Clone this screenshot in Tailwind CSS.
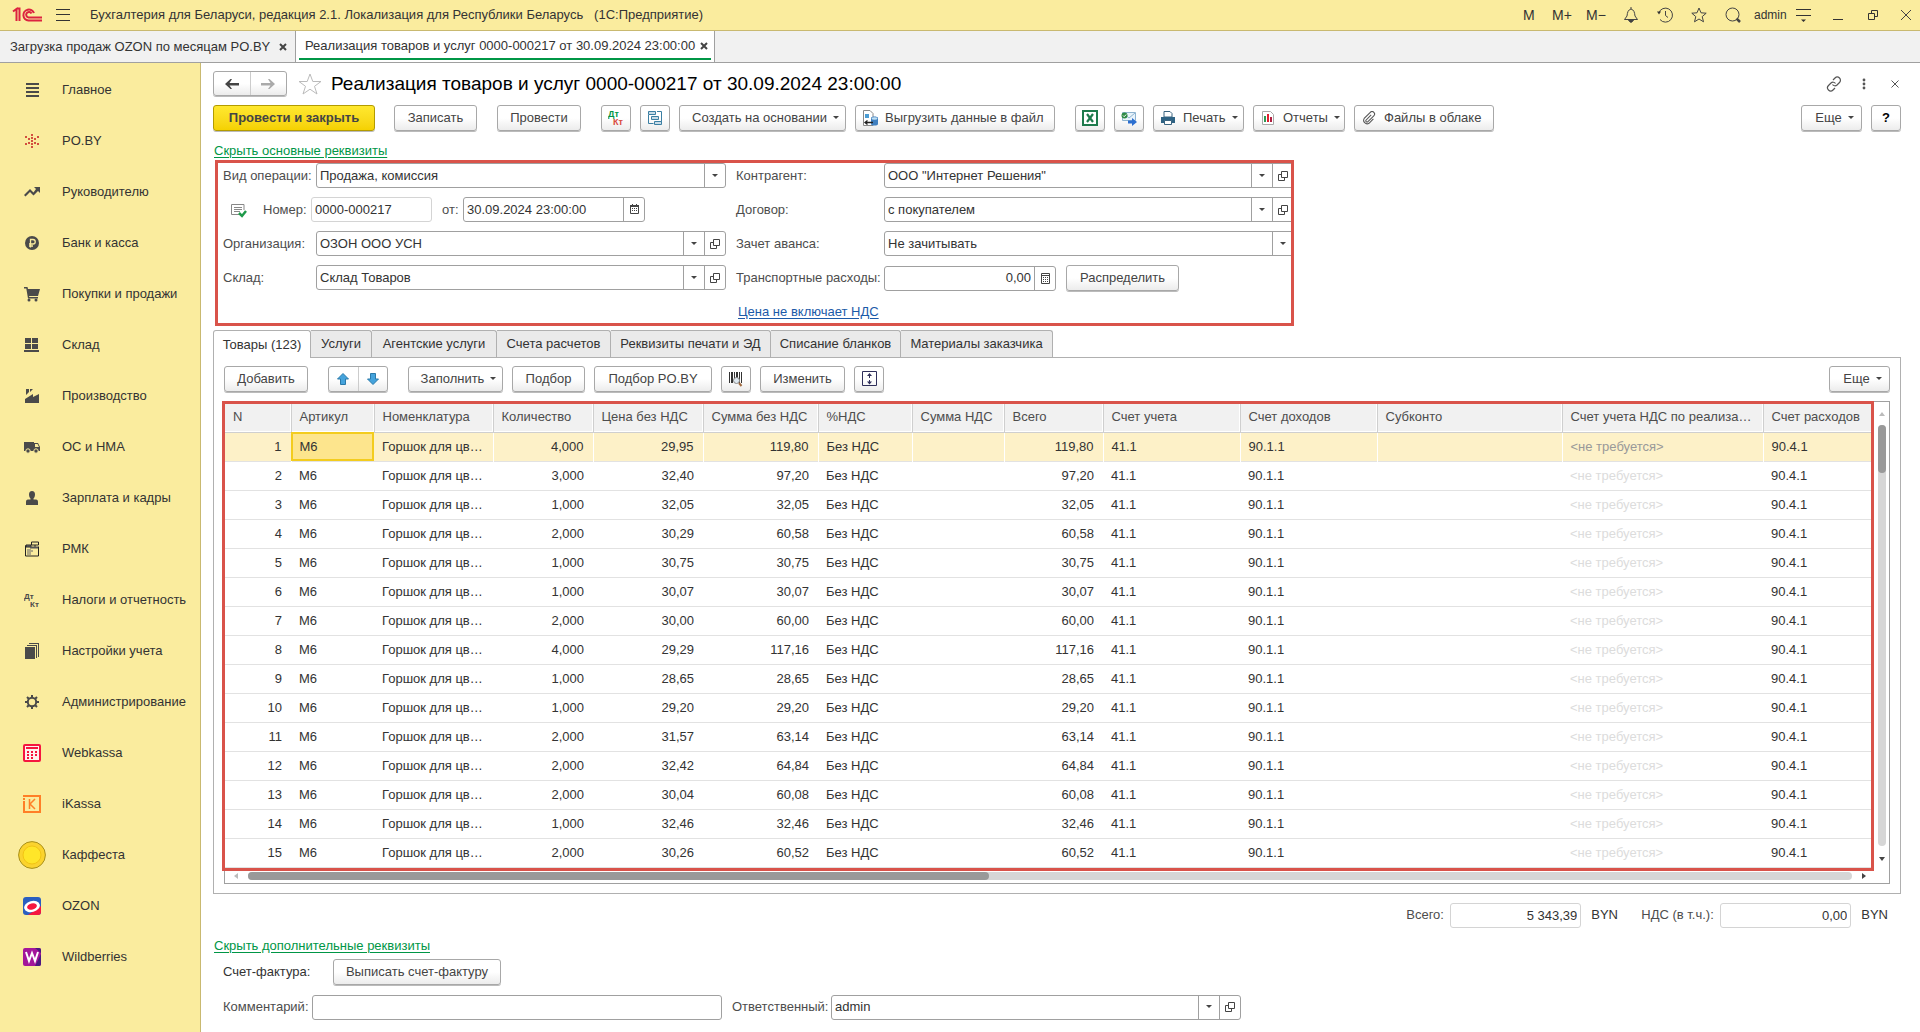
<!DOCTYPE html>
<html lang="ru">
<head>
<meta charset="utf-8">
<title>Реализация товаров и услуг</title>
<script src="https://cdn.jsdelivr.net/npm/@tailwindcss/browser@4"></script>
</head>
<body class="flex min-h-screen flex-col bg-white font-['Liberation_Sans',Arial,sans-serif] text-[13px] leading-4 text-[#333]">

<header class="flex h-[31px] shrink-0 items-center border-b border-[#c9b970] bg-[#faec9e] pl-3">
  <svg class="h-4 w-[30px]" viewBox="0 0 30 16" fill="none" stroke="#dc2340" stroke-width="2" role="img" aria-label="1C"><path d="M1 4.500 4.500 2v12M7.500 14V1.500H4.800"/><path d="M22 6a5.500 5.500 0 1 0-5.500 7.500H30"/><path d="M19.500 6.500a2.800 2.800 0 1 0-2.800 4H30"/></svg>
  <button class="ml-3.5 flex h-6 w-4 items-center" aria-label="Меню"><svg class="h-3 w-[14px]" viewBox="0 0 14 12" stroke="#333"><path d="M0 .5h14M0 5.500h14M0 11.500h14"/></svg></button>
  <h1 class="ml-[18px] whitespace-pre">Бухгалтерия для Беларуси, редакция 2.1. Локализация для Республики Беларусь   (1С:Предприятие)</h1>
  <div class="ml-auto flex items-center text-[14px]">
    <button class="w-[29px] text-left">M</button>
    <button class="w-[34px] text-left">M+</button>
    <button class="w-[37px] text-left">M−</button>
    <button class="w-[34px]" aria-label="Уведомления"><svg class="size-4" viewBox="0 0 16 16" fill="none" stroke="#444"><path d="M1.500 12.500h13l-2.500-3.500C11.500 5 11 3 8 2 5 3 4.500 5 4 9zM8 0v2"/><path d="M5.500 13.500h5l-2.500 2z" fill="#333"/></svg></button>
    <button class="w-[34px]" aria-label="История"><svg class="size-4" viewBox="0 0 16 16" fill="none" stroke="#444"><path d="M1.800 6A7 7 0 1 1 3 12.500M8.500 4v4.500l2.500 2"/><path d="M0 4.500h4l-2 3z" fill="#333" stroke="none"/></svg></button>
    <button class="w-[34px]" aria-label="Избранное"><svg class="size-4" viewBox="0 0 16 16" fill="none" stroke="#444"><path d="m8 1 2 4.800 5.200.4-4 3.400 1.300 5.200L8 12l-4.500 2.800 1.300-5.200-4-3.400L6 5.800z"/></svg></button>
    <button class="w-[29px]" aria-label="Поиск"><svg class="size-4" viewBox="0 0 16 16" fill="none" stroke="#444"><circle cx="7.500" cy="7.500" r="6.500"/><path d="m11.500 11.500 3.500 3.500" stroke-width="2.500"/></svg></button>
    <button class="w-[42px] text-left text-[12px]">admin</button>
    <button class="w-9" aria-label="Настройки"><svg class="h-4 w-[15px]" viewBox="0 0 15 16" stroke="#333"><path d="M0 2.500h15M0 8.500h15"/><path d="M5 12.500h5l-2.500 2.500z" fill="#333" stroke="none"/></svg></button>
    <button class="w-[35px]" aria-label="Свернуть"><svg class="size-3" viewBox="0 0 12 12" stroke="#333"><path d="M1 10.500h10"/></svg></button>
    <button class="w-[33px]" aria-label="Развернуть"><svg class="size-3" viewBox="0 0 12 12" fill="none" stroke="#333"><path d="M1.500 4.500h6v6h-6zM4.500 4.500v-3h6v6h-3"/></svg></button>
    <button class="w-5" aria-label="Закрыть программу"><svg class="size-3" viewBox="0 0 12 12" stroke="#444"><path d="m1 1 10 10M11 1 1 11"/></svg></button>
  </div>
</header>

<nav class="flex h-8 shrink-0 border-b border-[#a0a0a0] bg-[#f1f1f1]" aria-label="Открытые окна">
  <div class="flex w-[295px] items-center pl-2.5">
    <a href="#" class="whitespace-nowrap">Загрузка продаж OZON по месяцам PO.BY</a>
    <button class="ml-auto mr-2 flex size-2" aria-label="Закрыть вкладку"><svg class="size-2" viewBox="0 0 8 8" stroke="#444" stroke-width="2"><path d="m1 1 6 6M7 1 1 7"/></svg></button>
  </div>
  <div class="flex w-[420px] flex-col border-x border-[#a0a0a0] bg-white px-[3px] pb-[2px]">
    <div class="flex flex-1 items-center border-b-2 border-[#009646] pl-1.5 pt-[2px]">
      <a href="#" class="whitespace-nowrap">Реализация товаров и услуг 0000-000217 от 30.09.2024 23:00:00</a>
      <button class="ml-auto mr-[3px] flex size-2" aria-label="Закрыть вкладку"><svg class="size-2" viewBox="0 0 8 8" stroke="#444" stroke-width="2"><path d="m1 1 6 6M7 1 1 7"/></svg></button>
    </div>
  </div>
</nav>

<div class="flex flex-1">
  <aside class="w-[201px] shrink-0 border-r border-[#c9b970] bg-[#faec9e]">
    <ul class="pt-px text-[#333]">
      <li><a href="#" class="flex h-[51px] items-center"><span class="flex w-[62px] justify-center pl-0.5"><svg class="size-4" viewBox="0 0 16 16" fill="#4a4a4a"><path d="M2 1h13v2H2zM2 5h13v2H2zM2 9h13v2H2zM2 13h13v2H2z"/></svg></span>Главное</a></li>
      <li><a href="#" class="flex h-[51px] items-center"><span class="flex w-[62px] justify-center pl-0.5"><svg class="size-4" viewBox="0 0 16 16" fill="#d2503f"><path d="M7 1h2v2H7zM7 4h2v2H7zM7 7h2v2H7zM7 10h2v2H7zM7 13h2v2H7zM4 5h2v2H4zM10 5h2v2h-2zM4 9h2v2H4zM10 9h2v2h-2zM1 3h2v2H1zM13 3h2v2h-2zM1 10h2v2H1zM13 10h2v2h-2z"/></svg></span>PO.BY</a></li>
      <li><a href="#" class="flex h-[51px] items-center"><span class="flex w-[62px] justify-center pl-0.5"><svg class="size-4" viewBox="0 0 16 16" fill="#4a4a4a"><path d="M10 3h6v6l-2-2-4.500 4.500-3.500-3.500L1.500 12.500 0 11l6-6 3.500 3.500L12 5z"/></svg></span>Руководителю</a></li>
      <li><a href="#" class="flex h-[51px] items-center"><span class="flex w-[62px] justify-center pl-0.5"><svg class="size-4" viewBox="0 0 16 16"><circle cx="8" cy="8" r="7" fill="#4a4a4a"/><path d="M6.500 12.500v-8H9a2 2 0 0 1 0 4.500H5M5 11h4" fill="none" stroke="#faec9e" stroke-width="1.300"/></svg></span>Банк и касса</a></li>
      <li><a href="#" class="flex h-[51px] items-center"><span class="flex w-[62px] justify-center pl-0.5"><svg class="size-4" viewBox="0 0 16 16" fill="#4a4a4a"><path d="M0 1h3.500l.5 2h12l-2 7H5l.3 1H14v1.500H4L2.300 2.500H0z"/><circle cx="5" cy="14" r="1.500"/><circle cx="12" cy="14" r="1.500"/></svg></span>Покупки и продажи</a></li>
      <li><a href="#" class="flex h-[51px] items-center"><span class="flex w-[62px] justify-center pl-0.5"><svg class="size-4" viewBox="0 0 16 16" fill="#4a4a4a"><path d="M1 1h6v5H1zM8 1h6v5H8zM1 7h6v5H1zM8 7h6v5H8zM0 13h15v2H0z"/></svg></span>Склад</a></li>
      <li><a href="#" class="flex h-[51px] items-center"><span class="flex w-[62px] justify-center pl-0.5"><svg class="size-4" viewBox="0 0 16 16" fill="#4a4a4a"><path d="M1 15v-4l8-5v3l6-3v9zM2 1h3v3L2 7zM6 1h3L6 4z"/></svg></span>Производство</a></li>
      <li><a href="#" class="flex h-[51px] items-center"><span class="flex w-[62px] justify-center pl-0.5"><svg class="size-4" viewBox="0 0 16 16" fill="#4a4a4a"><path fill-rule="evenodd" d="M0 3h10v1h4l2 4v4H0zm11 2v3h4l-1.500-3z"/><circle cx="4" cy="12" r="2.200" stroke="#faec9e"/><circle cx="12" cy="12" r="2.200" stroke="#faec9e"/></svg></span>ОС и НМА</a></li>
      <li><a href="#" class="flex h-[51px] items-center"><span class="flex w-[62px] justify-center pl-0.5"><svg class="size-4" viewBox="0 0 16 16" fill="#4a4a4a"><path d="M8 1c2 0 3 1.500 3 3.500C11 7 10 8 9.500 8.500v1H12c1.500 0 2 1 2 2.500v3H2v-3c0-1.500.5-2.500 2-2.500h2.500v-1C6 8 5 7 5 4.500 5 2.500 6 1 8 1z"/></svg></span>Зарплата и кадры</a></li>
      <li><a href="#" class="flex h-[51px] items-center"><span class="flex w-[62px] justify-center pl-0.5"><svg class="size-4" viewBox="0 0 16 16" fill="none" stroke="#222"><path d="M1.500 4.500v10.500h13V5.500M7.500 1h7v3h-7zM11 4v2"/><path d="M2 4h5v2H2z" fill="#777"/><path d="M6 6.500h8" stroke-width="2" stroke="#555"/><path d="M4 8v6M6 8v6M8 9v2" stroke="#666"/></svg></span>РМК</a></li>
      <li><a href="#" class="flex h-[51px] items-center"><span class="flex w-[62px] justify-center pl-0.5"><svg class="size-4" viewBox="0 0 16 16" fill="#4a4a4a" font-family="Liberation Sans" font-weight="bold" font-size="8"><text x="0" y="7">Дт</text><text x="6" y="15">Кт</text></svg></span>Налоги и отчетность</a></li>
      <li><a href="#" class="flex h-[51px] items-center"><span class="flex w-[62px] justify-center pl-0.5"><svg class="size-4" viewBox="0 0 16 16" fill="#4a4a4a"><path d="M1 4h10v12H1zM3 2h10v13h-1V3H3zM5 0h10v14h-1V1H5z"/></svg></span>Настройки учета</a></li>
      <li><a href="#" class="flex h-[51px] items-center"><span class="flex w-[62px] justify-center pl-0.5"><svg class="size-4" viewBox="0 0 16 16" fill="none" stroke="#4a4a4a" stroke-width="2"><circle cx="8" cy="8" r="4.200"/><path d="M8 1v3M8 12v3M1 8h3M12 8h3M3 3l2 2M11 11l2 2M3 13l2-2M11 5l2-2"/></svg></span>Администрирование</a></li>
      <li><a href="#" class="flex h-[51px] items-center"><span class="flex w-[62px] justify-center pl-0.5"><svg class="size-[18px]" viewBox="0 0 18 18"><rect x="1" y="1" width="16" height="16" rx="1" fill="#fff3ee" stroke="#f5163f" stroke-width="2"/><path d="M3 3h12v2H3zM4 7h2v2H4zM8 7h2v2H8zM12 7h2v2h-2zM4 10h2v2H4zM8 10h2v2H8zM12 10h2v2h-2zM4 13h2v2H4zM8 13h2v2H8z" fill="#f5163f"/></svg></span>Webkassa</a></li>
      <li><a href="#" class="flex h-[51px] items-center"><span class="flex w-[62px] justify-center pl-0.5"><svg class="size-[18px]" viewBox="0 0 18 18" fill="none" stroke="#ff7f27" stroke-width="2"><path d="M0 1h17v16H1V6M1 3v2"/><path d="M6.500 4v10M12 4 7 9l5 5" stroke-width="1.500"/></svg></span>iKassa</a></li>
      <li><a href="#" class="flex h-[51px] items-center"><span class="flex w-[62px] justify-center pl-0.5"><svg class="size-7" viewBox="0 0 28 28"><circle cx="14" cy="14" r="13.400" fill="#fbd32e" stroke="#a8901c"/><circle cx="14" cy="14" r="9" fill="#ffe629" stroke="#f2c414"/></svg></span>Каффеста</a></li>
      <li><a href="#" class="flex h-[51px] items-center"><span class="flex w-[62px] justify-center pl-0.5"><svg class="size-[18px]" viewBox="0 0 18 18"><rect width="18" height="18" rx="3" fill="#2a5fc0"/><path d="M18 9v6a3 3 0 0 1-3 3H5z" fill="#f5163f"/><ellipse cx="9" cy="9.500" rx="8" ry="5.500" fill="#fff" transform="rotate(-15 9 9.500)"/><ellipse cx="9" cy="9.500" rx="5" ry="3" fill="#f5163f" transform="rotate(-15 9 9.500)"/></svg></span>OZON</a></li>
      <li><a href="#" class="flex h-[51px] items-center"><span class="flex w-[62px] justify-center pl-0.5"><svg class="size-[18px]" viewBox="0 0 18 18"><rect width="18" height="18" rx="2" fill="#a3169a"/><path d="M12 18 18 6v10a2 2 0 0 1-2 2zM12 0h4a2 2 0 0 1 2 2v3z" fill="#4a1980"/><path d="m3 4 3 9 3-8 3 8 3-9" fill="none" stroke="#fff" stroke-width="2"/></svg></span>Wildberries</a></li>
    </ul>
  </aside>

  <main class="min-w-0 flex-1 pl-3 pr-[19px] pt-2">
    <div class="flex h-[25px] items-center">
      <div class="flex h-[25px] w-[74px] rounded-[3px] border border-[#a8a8a8] bg-linear-to-b from-white from-50% to-[#ececec] shadow-[0_1px_0_#bbb]">
        <button class="flex flex-1 items-center justify-center border-r border-[#ccc]" aria-label="Назад"><svg class="h-3 w-[14px]" viewBox="0 0 14 12" fill="#444"><path d="m0 6 5.500-5H7L4.500 5H14v2.500H4.500L7 11H5.500z"/></svg></button>
        <button class="flex flex-1 items-center justify-center" aria-label="Вперед"><svg class="h-3 w-[14px]" viewBox="0 0 14 12" fill="#aaa"><path d="M14 6 8.500 1H7l2.500 4H0v2.500h9.500L7 11h1.500z"/></svg></button>
      </div>
      <button class="ml-[11px]" aria-label="В избранное"><svg class="block h-[22px] w-6" viewBox="0 0 24 22" fill="none" stroke="#bbb"><path d="m12 1 2.800 7.500H23l-6.500 4.800 2.500 7.700-7-4.800-7 4.800 2.500-7.700L1 8.500h8.200z"/></svg></button>
      <h2 class="ml-[9px] whitespace-nowrap text-[19px] leading-6 text-black">Реализация товаров и услуг 0000-000217 от 30.09.2024 23:00:00</h2>
      <div class="ml-auto flex items-center">
        <button class="w-9" aria-label="Ссылка"><svg class="size-4" viewBox="0 0 16 16" fill="none" stroke="#555" stroke-width="1.200"><path d="m7 4 2-2a3 3 0 0 1 4.500 4.500l-2.500 2.500a3 3 0 0 1-4.500-.5M9 12l-2 2a3 3 0 0 1-4.500-4.500L5 7a3 3 0 0 1 4.500.5"/></svg></button>
        <button class="w-[29px]" aria-label="Ещё действия"><svg class="h-3 w-1" viewBox="0 0 4 12" fill="#555"><circle cx="2" cy="2" r="1.400"/><circle cx="2" cy="6" r="1.400"/><circle cx="2" cy="10" r="1.400"/></svg></button>
        <button class="w-2.5" aria-label="Закрыть"><svg class="size-2" viewBox="0 0 8 8" stroke="#555"><path d="m.5.5 7 7M7.500.5l-7 7"/></svg></button>
      </div>
    </div>

    <div class="mt-[9px] flex items-center text-[#444]">
      <button class="h-[26px] w-[162px] rounded-[3px] border border-[#b39b00] bg-linear-to-b from-[#ffe82e] to-[#f5d100] font-bold shadow-[0_1px_0_#bbb]">Провести и закрыть</button>
      <button class="ml-[19px] h-[26px] w-[83px] rounded-[3px] border border-[#a8a8a8] bg-linear-to-b from-white from-50% to-[#ececec] shadow-[0_1px_0_#bbb]">Записать</button>
      <button class="ml-5 h-[26px] w-[84px] rounded-[3px] border border-[#a8a8a8] bg-linear-to-b from-white from-50% to-[#ececec] shadow-[0_1px_0_#bbb]">Провести</button>
      <button class="ml-5 flex h-[26px] w-[30px] items-center justify-center rounded-[3px] border border-[#a8a8a8] bg-linear-to-b from-white from-50% to-[#ececec] shadow-[0_1px_0_#bbb]" aria-label="Проводки"><svg class="size-4" viewBox="0 0 16 16" font-family="Liberation Sans" font-weight="bold" font-size="9"><text x="0" y="7" fill="#009646">Дт</text><text x="5" y="15" fill="#d94a3d">Кт</text></svg></button>
      <button class="ml-[9px] flex h-[26px] w-[30px] items-center justify-center rounded-[3px] border border-[#a8a8a8] bg-linear-to-b from-white from-50% to-[#ececec] shadow-[0_1px_0_#bbb]" aria-label="Структура подчиненности"><svg class="size-4" viewBox="0 0 16 16" fill="#c8dce8" stroke="#3b7fa3"><path d="M1.500 5v8.500h5M10 1.500h4.500V13" fill="none"/><path d="M1.500 1.500h7v3h-7zM4.500 6.500h7v3h-7zM7.500 11.500h7v3h-7z"/></svg></button>
      <button class="ml-[9px] flex h-[26px] w-[167px] items-center justify-center gap-[6px] rounded-[3px] border border-[#a8a8a8] bg-linear-to-b from-white from-50% to-[#ececec] pl-1.5 shadow-[0_1px_0_#bbb]">Создать на основании<svg class="h-1 w-1.5" viewBox="0 0 6 4" fill="#444"><path d="M0 0h6L3 3z"/></svg></button>
      <button class="ml-[9px] flex h-[26px] w-[200px] items-center rounded-[3px] border border-[#a8a8a8] bg-linear-to-b from-white from-50% to-[#ececec] pl-1.5 shadow-[0_1px_0_#bbb]"><svg class="mr-[7px] size-4" viewBox="0 0 16 16"><path d="M1.500.5H8l3 3v12H1.500z" fill="#fff" stroke="#888"/><path d="M3 4h4v4H3z" fill="#4b9cd3"/><path d="M9 8c0-2 7-2 7 0v6c0 2-7 2-7 0z" fill="#3f7fbf"/><ellipse cx="12.500" cy="8.500" rx="3" ry="1.200" fill="#bfe0f5"/><path d="M3 12.500h8M5.500 10.500 3 12.500l2.500 2" fill="none" stroke="#222" stroke-width="1.300"/></svg>Выгрузить данные в файл</button>
      <button class="ml-5 flex h-[26px] w-[30px] items-center justify-center rounded-[3px] border border-[#a8a8a8] bg-linear-to-b from-white from-50% to-[#ececec] shadow-[0_1px_0_#bbb]" aria-label="Excel"><svg class="size-4" viewBox="0 0 16 16" fill="none" stroke="#1d7a4c" stroke-width="2"><path d="M1 1h14v14H1z" fill="#fff"/><path d="m5 4 6 8M11 4l-6 8" stroke-width="2.200"/></svg></button>
      <button class="ml-[9px] flex h-[26px] w-[30px] items-center justify-center rounded-[3px] border border-[#a8a8a8] bg-linear-to-b from-white from-50% to-[#ececec] shadow-[0_1px_0_#bbb]" aria-label="Отправить"><svg class="size-4" viewBox="0 0 16 16"><path d="M1.500 2.500h13v8h-13z" fill="#e8f3fb" stroke="#8fb4d0"/><path d="m2 3 6 5 6-5" fill="none" stroke="#8fb4d0"/><circle cx="3.500" cy="5.500" r="3" fill="#2f8a45"/><path d="m2 5.500 1.200 1.200L5.200 4.500" fill="none" stroke="#fff"/><path d="M7 10.500h4V8l5 4-5 4v-2.500H7z" fill="#2c6fd0"/></svg></button>
      <button class="ml-[9px] flex h-[26px] w-[91px] items-center rounded-[3px] border border-[#a8a8a8] bg-linear-to-b from-white from-50% to-[#ececec] pl-1.5 shadow-[0_1px_0_#bbb]"><svg class="mr-[7px] size-4" viewBox="0 0 16 16"><path d="M4 1.500h6l2 2V7H4z" fill="#fff" stroke="#3a6480"/><path d="M1 7h14v6H1z" fill="#2f6384"/><path d="M4.500 10.500h7v4h-7z" fill="#fff" stroke="#3a6480"/></svg>Печать<svg class="ml-1.5 h-1 w-1.5" viewBox="0 0 6 4" fill="#444"><path d="M0 0h6L3 3z"/></svg></button>
      <button class="ml-[9px] flex h-[26px] w-[92px] items-center rounded-[3px] border border-[#a8a8a8] bg-linear-to-b from-white from-50% to-[#ececec] pl-1.5 shadow-[0_1px_0_#bbb]"><svg class="mr-[7px] size-4" viewBox="0 0 16 16"><path d="M2.500 1.500h8l3 3v10h-11z" fill="#fff" stroke="#aaa"/><path d="M4 6h2v6H4z" fill="#2f9a55"/><path d="M7 4h2v8H7z" fill="#e02030"/><path d="M10 7h2v5h-2z" fill="#b02040"/></svg>Отчеты<svg class="ml-1.5 h-1 w-1.5" viewBox="0 0 6 4" fill="#444"><path d="M0 0h6L3 3z"/></svg></button>
      <button class="ml-[9px] flex h-[26px] w-[140px] items-center rounded-[3px] border border-[#a8a8a8] bg-linear-to-b from-white from-50% to-[#ececec] pl-[7px] shadow-[0_1px_0_#bbb]"><svg class="mr-2 size-[14px]" viewBox="0 0 16 16" fill="none" stroke="#555" stroke-width="1.200"><path d="m10.500 4.500-6 6a1.500 1.500 0 0 0 2 2l7-7a2.800 2.800 0 0 0-4-4l-7 7a4 4 0 0 0 5.500 5.500l5-5"/></svg>Файлы в облаке</button>
      <button class="ml-auto flex h-[26px] w-[61px] items-center justify-center gap-[6px] rounded-[3px] border border-[#a8a8a8] bg-linear-to-b from-white from-50% to-[#ececec] pl-1.5 shadow-[0_1px_0_#bbb]">Еще<svg class="h-1 w-1.5" viewBox="0 0 6 4" fill="#444"><path d="M0 0h6L3 3z"/></svg></button>
      <button class="ml-[9px] h-[26px] w-[30px] rounded-[3px] border border-[#a8a8a8] bg-linear-to-b from-white from-50% to-[#ececec] font-bold text-black shadow-[0_1px_0_#bbb]">?</button>
    </div>

    <div class="mt-3 flex h-[17px]"><a href="#" class="ml-px text-[#009646] underline underline-offset-2">Скрыть основные реквизиты</a></div>

    <section class="ml-0.5 flex h-[166px] w-[1079px] overflow-hidden border-3 border-[#d9534a] pl-[5px] text-[#4d4d4d]">
      <div class="flex w-[503px] shrink-0 flex-col gap-[9px]">
        <div class="flex items-center"><label for="op" class="w-[93px]">Вид операции:</label>
          <div class="flex h-[25px] w-[410px] rounded-[3px] border border-[#a0a0a0]"><select id="op" class="min-w-0 flex-1 appearance-none px-[3px] text-[#333]"><option>Продажа, комиссия</option></select><span class="pointer-events-none flex w-[21px] items-center justify-center border-l border-[#a0a0a0]"><svg class="h-1 w-1.5" viewBox="0 0 6 4" fill="#444"><path d="M0 0h6L3 3z"/></svg></span></div></div>
        <div class="flex items-center"><svg class="ml-2 size-4" viewBox="0 0 16 16" fill="none" stroke="#888"><path d="M9 12.500H.5v-10h12.500V8M3 5.500h8M3 7.500h8M3 9.500h6"/><path d="m8 11 3 3 4-5" stroke="#1f9a4a" stroke-width="2.500"/></svg>
          <label for="num" class="ml-4 w-12">Номер:</label>
          <input id="num" value="0000-000217" readonly class="h-[25px] w-[121px] rounded-[3px] border border-[#d4d4d4] px-[3px] text-[#333]">
          <label for="date" class="ml-2.5 w-[21px]">от:</label>
          <div class="flex h-[25px] w-[182px] rounded-[3px] border border-[#a0a0a0]"><input id="date" value="30.09.2024 23:00:00" class="min-w-0 flex-1 px-[3px] text-[#333]"><button class="flex w-[21px] items-center justify-center border-l border-[#a0a0a0]" aria-label="Календарь"><svg class="h-[11px] w-[9px]" viewBox="0 0 9 11" fill="none" stroke="#444"><path d="M.5 1.500h8v8h-8z"/><path d="M0 1h9v2H0zM2 0h1v1H2zM6 0h1v1H6zM2 4h1v1H2zM4 4h1v1H4zM6 4h1v1H6zM2 6h1v1H2zM4 6h1v1H4zM6 6h1v1H6z" fill="#444" stroke="none"/></svg></button></div></div>
        <div class="flex items-center"><label for="org" class="w-[93px]">Организация:</label>
          <div class="flex h-[25px] w-[410px] rounded-[3px] border border-[#a0a0a0]"><input id="org" value="ОЗОН ООО УСН" class="min-w-0 flex-1 px-[3px] text-[#333]"><button class="flex w-[21px] items-center justify-center border-l border-[#a0a0a0]" aria-label="Выбрать"><svg class="h-1 w-1.5" viewBox="0 0 6 4" fill="#444"><path d="M0 0h6L3 3z"/></svg></button><button class="flex w-[21px] items-center justify-center border-l border-[#a0a0a0]" aria-label="Открыть"><svg class="size-[10px]" viewBox="0 0 10 10" fill="none" stroke="#444"><path d="M3.500.5h6v6h-6zM3 3.500H.5v6h6V7"/></svg></button></div></div>
        <div class="flex items-center"><label for="store" class="w-[93px]">Склад:</label>
          <div class="flex h-[25px] w-[410px] rounded-[3px] border border-[#a0a0a0]"><input id="store" value="Склад Товаров" class="min-w-0 flex-1 px-[3px] text-[#333]"><button class="flex w-[21px] items-center justify-center border-l border-[#a0a0a0]" aria-label="Выбрать"><svg class="h-1 w-1.5" viewBox="0 0 6 4" fill="#444"><path d="M0 0h6L3 3z"/></svg></button><button class="flex w-[21px] items-center justify-center border-l border-[#a0a0a0]" aria-label="Открыть"><svg class="size-[10px]" viewBox="0 0 10 10" fill="none" stroke="#444"><path d="M3.500.5h6v6h-6zM3 3.500H.5v6h6V7"/></svg></button></div></div>
      </div>
      <div class="ml-2.5 flex w-[560px] shrink-0 flex-col gap-[9px]">
        <div class="flex items-center"><label for="agent" class="w-[148px]">Контрагент:</label>
          <div class="flex h-[25px] w-[410px] rounded-[3px] border border-[#a0a0a0]"><input id="agent" value="ООО &quot;Интернет Решения&quot;" class="min-w-0 flex-1 px-[3px] text-[#333]"><button class="flex w-[21px] items-center justify-center border-l border-[#a0a0a0]" aria-label="Выбрать"><svg class="h-1 w-1.5" viewBox="0 0 6 4" fill="#444"><path d="M0 0h6L3 3z"/></svg></button><button class="flex w-[21px] items-center justify-center border-l border-[#a0a0a0]" aria-label="Открыть"><svg class="size-[10px]" viewBox="0 0 10 10" fill="none" stroke="#444"><path d="M3.500.5h6v6h-6zM3 3.500H.5v6h6V7"/></svg></button></div></div>
        <div class="flex items-center"><label for="contract" class="w-[148px]">Договор:</label>
          <div class="flex h-[25px] w-[410px] rounded-[3px] border border-[#a0a0a0]"><input id="contract" value="с покупателем" class="min-w-0 flex-1 px-[3px] text-[#333]"><button class="flex w-[21px] items-center justify-center border-l border-[#a0a0a0]" aria-label="Выбрать"><svg class="h-1 w-1.5" viewBox="0 0 6 4" fill="#444"><path d="M0 0h6L3 3z"/></svg></button><button class="flex w-[21px] items-center justify-center border-l border-[#a0a0a0]" aria-label="Открыть"><svg class="size-[10px]" viewBox="0 0 10 10" fill="none" stroke="#444"><path d="M3.500.5h6v6h-6zM3 3.500H.5v6h6V7"/></svg></button></div></div>
        <div class="flex items-center"><label for="adv" class="w-[148px]">Зачет аванса:</label>
          <div class="flex h-[25px] w-[410px] rounded-[3px] border border-[#a0a0a0]"><select id="adv" class="min-w-0 flex-1 appearance-none px-[3px] text-[#333]"><option>Не зачитывать</option></select><span class="pointer-events-none flex w-[21px] items-center justify-center border-l border-[#a0a0a0]"><svg class="h-1 w-1.5" viewBox="0 0 6 4" fill="#444"><path d="M0 0h6L3 3z"/></svg></span></div></div>
        <div class="flex items-center"><label for="transp" class="w-[148px] whitespace-nowrap">Транспортные расходы:</label>
          <div class="flex h-[25px] w-[172px] rounded-[3px] border border-[#a0a0a0]"><input id="transp" value="0,00" class="min-w-0 flex-1 px-[3px] text-right text-[#333]"><button class="flex w-[21px] items-center justify-center border-l border-[#a0a0a0]" aria-label="Калькулятор"><svg class="h-[11px] w-[9px]" viewBox="0 0 9 11" fill="none" stroke="#444"><path d="M.5.500h8v10h-8zM1 2.500h7M2 4.500h1M4 4.500h1M6 4.500h1M2 6.500h1M4 6.500h1M6 6.500h1M2 8.500h1M4 8.500h1M6 8.500h1"/></svg></button></div>
          <button class="ml-2.5 h-[26px] w-[113px] rounded-[3px] border border-[#a8a8a8] bg-linear-to-b from-white from-50% to-[#ececec] text-[#444] shadow-[0_1px_0_#bbb]">Распределить</button></div>
        <a href="#" class="ml-0.5 mt-1 self-start text-[#1b5aa8] underline underline-offset-2">Цена не включает НДС</a>
      </div>
    </section>

    <div role="tablist" class="mt-1 flex h-[28px] border-b border-[#b0b0b0]">
      <button role="tab" aria-selected="true" class="-mb-px h-[28px] w-[98px] rounded-t-[3px] border border-b-0 border-[#b0b0b0] bg-white">Товары (123)</button>
      <button role="tab" class="h-[27px] w-[61px] rounded-tr-[3px] border border-b-0 border-l-0 border-[#b0b0b0] bg-[#eaeaea]">Услуги</button>
      <button role="tab" class="h-[27px] w-[125px] rounded-tr-[3px] border border-b-0 border-l-0 border-[#b0b0b0] bg-[#eaeaea]">Агентские услуги</button>
      <button role="tab" class="h-[27px] w-[114px] rounded-tr-[3px] border border-b-0 border-l-0 border-[#b0b0b0] bg-[#eaeaea]">Счета расчетов</button>
      <button role="tab" class="h-[27px] w-[160px] rounded-tr-[3px] border border-b-0 border-l-0 border-[#b0b0b0] bg-[#eaeaea]">Реквизиты печати и ЭД</button>
      <button role="tab" class="h-[27px] w-[130px] rounded-tr-[3px] border border-b-0 border-l-0 border-[#b0b0b0] bg-[#eaeaea]">Списание бланков</button>
      <button role="tab" class="h-[27px] w-[152px] rounded-tr-[3px] border border-b-0 border-l-0 border-[#b0b0b0] bg-[#eaeaea]">Материалы заказчика</button>
    </div>

    <section class="border border-t-0 border-[#b0b0b0] px-2.5 pb-[9px] pt-2">
      <div class="flex items-center text-[#444]">
        <button class="h-[26px] w-[84px] rounded-[3px] border border-[#a8a8a8] bg-linear-to-b from-white from-50% to-[#ececec] shadow-[0_1px_0_#bbb]">Добавить</button>
        <div class="ml-5 flex h-[26px] w-[60px] rounded-[3px] border border-[#a8a8a8] bg-linear-to-b from-white from-50% to-[#ececec] shadow-[0_1px_0_#bbb]">
          <button class="flex flex-1 items-center justify-center border-r border-[#ccc]" aria-label="Вверх"><svg class="size-3" viewBox="0 0 12 12" fill="#45a3dc" stroke="#2b7aaa"><path d="m6 .5 5.500 5.500H8.500v5.500h-5V6H.5z"/></svg></button>
          <button class="flex flex-1 items-center justify-center" aria-label="Вниз"><svg class="size-3" viewBox="0 0 12 12" fill="#45a3dc" stroke="#2b7aaa"><path d="M6 11.500.5 6h3V.5h5V6h3z"/></svg></button>
        </div>
        <button class="ml-5 flex h-[26px] w-[95px] items-center justify-center gap-[6px] rounded-[3px] border border-[#a8a8a8] bg-linear-to-b from-white from-50% to-[#ececec] pl-1.5 shadow-[0_1px_0_#bbb]">Заполнить<svg class="h-1 w-1.5" viewBox="0 0 6 4" fill="#444"><path d="M0 0h6L3 3z"/></svg></button>
        <button class="ml-[9px] h-[26px] w-[73px] rounded-[3px] border border-[#a8a8a8] bg-linear-to-b from-white from-50% to-[#ececec] shadow-[0_1px_0_#bbb]">Подбор</button>
        <button class="ml-[9px] h-[26px] w-[118px] rounded-[3px] border border-[#a8a8a8] bg-linear-to-b from-white from-50% to-[#ececec] shadow-[0_1px_0_#bbb]">Подбор PO.BY</button>
        <button class="ml-[9px] flex h-[26px] w-[30px] items-center justify-center rounded-[3px] border border-[#a8a8a8] bg-linear-to-b from-white from-50% to-[#ececec] shadow-[0_1px_0_#bbb]" aria-label="Штрихкод"><svg class="size-4" viewBox="0 0 16 16"><path d="M1 1h1v11H1zM3 1h2v11H3zM6 1h1v9H6zM8 1h2v9H8zM11 1h1v11h-1zM13 1h1v11h-1z" fill="#333"/><circle cx="8.500" cy="9.500" r="3" fill="#dfe9f0" stroke="#888"/><path d="m11 12 2.500 3" stroke="#a06a40" stroke-width="2"/></svg></button>
        <button class="ml-[9px] h-[26px] w-[85px] rounded-[3px] border border-[#a8a8a8] bg-linear-to-b from-white from-50% to-[#ececec] shadow-[0_1px_0_#bbb]">Изменить</button>
        <button class="ml-[9px] flex h-[26px] w-[30px] items-center justify-center rounded-[3px] border border-[#a8a8a8] bg-linear-to-b from-white from-50% to-[#ececec] shadow-[0_1px_0_#bbb]" aria-label="Высота строк"><svg class="h-4 w-[15px]" viewBox="0 0 15 16" fill="none" stroke="#2f2f5a"><path d="M.5.500h14v14H.500z"/><path d="M7.500 3v4M7.500 9v4"/><path d="M5 5h5L7.500 2zM5 10.500h5L7.500 13.500z" fill="#2f2f5a" stroke="none"/></svg></button>
        <button class="ml-auto flex h-[26px] w-[61px] items-center justify-center gap-[6px] rounded-[3px] border border-[#a8a8a8] bg-linear-to-b from-white from-50% to-[#ececec] pl-1.5 shadow-[0_1px_0_#bbb]">Еще<svg class="h-1 w-1.5" viewBox="0 0 6 4" fill="#444"><path d="M0 0h6L3 3z"/></svg></button>
      </div>

      <div class="mt-[9px] border border-[#a0a0a0]">
        <div class="flex">
          <div class="relative min-w-0 flex-1">
            <table class="w-full table-fixed border-collapse">
              <colgroup><col class="w-[66px]"><col class="w-[83px]"><col class="w-[119px]"><col class="w-[100px]"><col class="w-[110px]"><col class="w-[115px]"><col class="w-[94px]"><col class="w-[92px]"><col class="w-[99px]"><col class="w-[137px]"><col class="w-[137px]"><col class="w-[185px]"><col class="w-[201px]"><col></colgroup>
              <thead><tr id="head" class="h-[30px] bg-[#f1f1f1] text-left text-[#4d4d4d]"></tr></thead>
              <tbody id="rows"></tbody>
            </table>
            <div class="pointer-events-none absolute -left-[3px] -top-px -bottom-[3px] right-0 border-3 border-[#d9534a]"></div>
          </div>
          <div class="flex w-[15px] shrink-0 flex-col items-center pb-[7px] pt-[10px]">
            <svg class="h-1 w-1.5" viewBox="0 0 6 4" fill="#bbb"><path d="M0 4h6L3 0z"/></svg>
            <div class="mt-[9px] w-2 flex-1 rounded-full bg-[#d6d6d6]"><div class="h-12 rounded-full bg-[#999]"></div></div>
            <svg class="mt-[11px] h-1 w-1.5" viewBox="0 0 6 4" fill="#444"><path d="M0 0h6L3 4z"/></svg>
          </div>
        </div>
        <div class="flex h-[15px] items-center pl-[9px] pr-[23px] pt-[2px]">
          <svg class="h-1.5 w-1" viewBox="0 0 4 6" fill="#bbb"><path d="M4 0v6L0 3z"/></svg>
          <div class="ml-2.5 mr-2.5 h-2 flex-1 rounded-full bg-[#d6d6d6]"><div class="h-2 w-[741px] rounded-full bg-[#999]"></div></div>
          <svg class="h-1.5 w-1" viewBox="0 0 4 6" fill="#444"><path d="M0 0v6l4-3z"/></svg>
        </div>
      </div>
    </section>

    <div class="mt-[9px] flex items-center justify-end pr-[13px]">
      <label for="total" class="w-11 text-[#4d4d4d]">Всего:</label>
      <input id="total" value="5 343,39" readonly class="h-[25px] w-[131px] rounded-[3px] border border-[#d4d4d4] px-[3px] text-right">
      <span class="ml-2.5 w-[50px]">BYN</span>
      <label for="vat" class="w-[79px] text-[#4d4d4d]">НДС (в т.ч.):</label>
      <input id="vat" value="0,00" readonly class="h-[25px] w-[131px] rounded-[3px] border border-[#d4d4d4] px-[3px] text-right">
      <span class="ml-2.5">BYN</span>
    </div>

    <div class="mt-[10px] flex"><a href="#" class="ml-px text-[#009646] underline underline-offset-2">Скрыть дополнительные реквизиты</a></div>
    <div class="mt-[5px] flex items-center pl-2.5"><span class="w-[110px]">Счет-фактура:</span>
      <button class="h-[26px] w-[168px] rounded-[3px] border border-[#a8a8a8] bg-linear-to-b from-white from-50% to-[#ececec] text-[#444] shadow-[0_1px_0_#bbb]">Выписать счет-фактуру</button></div>
    <div class="mt-[10px] flex items-center pl-2.5 text-[#4d4d4d]">
      <label for="comment" class="w-[89px]">Комментарий:</label>
      <input id="comment" class="h-[25px] w-[410px] rounded-[3px] border border-[#a0a0a0] px-[3px]">
      <label for="resp" class="ml-2.5 w-[99px]">Ответственный:</label>
      <div class="flex h-[25px] w-[410px] rounded-[3px] border border-[#a0a0a0]"><input id="resp" value="admin" class="min-w-0 flex-1 px-[3px] text-[#333]"><button class="flex w-[21px] items-center justify-center border-l border-[#a0a0a0]" aria-label="Выбрать"><svg class="h-1 w-1.5" viewBox="0 0 6 4" fill="#444"><path d="M0 0h6L3 3z"/></svg></button><button class="flex w-[21px] items-center justify-center border-l border-[#a0a0a0]" aria-label="Открыть"><svg class="size-[10px]" viewBox="0 0 10 10" fill="none" stroke="#444"><path d="M3.500.5h6v6h-6zM3 3.500H.5v6h6V7"/></svg></button></div>
    </div>
  </main>
</div>

<script>
const heads = ['N','Артикул','Номенклатура','Количество','Цена без НДС','Сумма без НДС','%НДС','Сумма НДС','Всего','Счет учета','Счет доходов','Субконто','Счет учета НДС по реализа…','Счет расходов'];
document.getElementById('head').innerHTML = heads.map(h => `<th class="whitespace-nowrap border-b border-r border-[#cfcfcf] pl-2 font-normal shadow-[inset_-1px_-1px_0_#fff]">${h}</th>`).join('');
const data = [
  ['4,000','29,95','119,80'],['3,000','32,40','97,20'],['1,000','32,05','32,05'],['2,000','30,29','60,58'],['1,000','30,75','30,75'],
  ['1,000','30,07','30,07'],['2,000','30,00','60,00'],['4,000','29,29','117,16'],['1,000','28,65','28,65'],['1,000','29,20','29,20'],
  ['2,000','31,57','63,14'],['2,000','32,42','64,84'],['2,000','30,04','60,08'],['1,000','32,46','32,46'],['2,000','30,26','60,52']];
document.getElementById('rows').innerHTML = data.map(([qty, price, sum], i) => {
  const first = i === 0;
  const cells = [i + 1, 'М6', 'Горшок для цв…', qty, price, sum, 'Без НДС', '', sum, '41.1', '90.1.1', '', '&lt;не требуется&gt;', '90.4.1'];
  return `<tr class="h-[29px] border-b border-[#e2e2e2] ${first ? 'bg-[#fdf1c8]' : ''}">` + cells.map((c, j) => {
    const align = [0, 3, 4, 5, 8].includes(j) ? 'text-right' : '';
    const tone = j === 12 ? (first ? 'text-[#999]' : 'text-[#dcdcdc]') : '';
    const line = first ? (j === 1 ? 'bg-[#fde58d] outline-2 -outline-offset-2 outline-[#f3cc1e]' : 'border-r border-r-white') : '';
    return `<td class="whitespace-nowrap pl-2 pr-[9px] ${align} ${tone} ${line}">${c}</td>`;
  }).join('') + '</tr>';
}).join('');
</script>
</body>
</html>
